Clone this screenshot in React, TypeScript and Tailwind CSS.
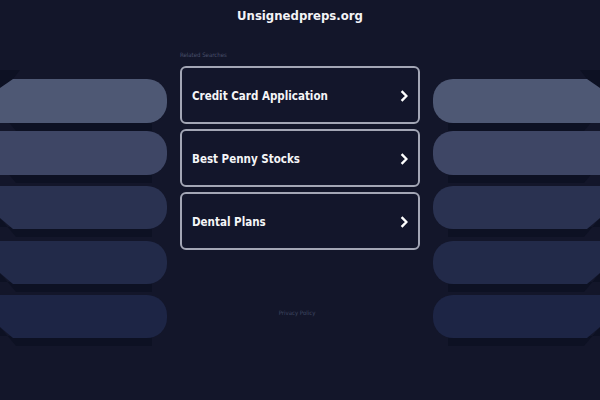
import React from "react";

type Bar = { t: number; b: number; c: string; ch: "top" | "none" | "bottom" };

const bars: Bar[] = [
  { t: 79, b: 123, c: "#4e5874", ch: "top" },
  { t: 131, b: 175, c: "#3e4665", ch: "none" },
  { t: 186, b: 229, c: "#2a3251", ch: "bottom" },
  { t: 241, b: 284, c: "#222a49", ch: "bottom" },
  { t: 295, b: 338, c: "#1d2545", ch: "bottom" },
];

function barPath(bar: Bar) {
  const R = 167;
  const r = 20;
  const { t, b, ch } = bar;
  const start = ch === "top" ? `M 0 ${t + 9} L 13 ${t}` : `M 0 ${t}`;
  const end = ch === "bottom" ? `H 13 L 0 ${b - 11} Z` : `H 0 Z`;
  return `${start} H ${R - r} A ${r} ${r} 0 0 1 ${R} ${t + r} V ${b - r} A ${r} ${r} 0 0 1 ${R - r} ${b} ${end}`;
}

function shadowPath(bar: Bar) {
  const { b } = bar;
  return `M 0 ${b - 11} L 16 ${b + 8} H 152 V ${b - 2} H 0 Z`;
}

function Stripes({ mirror }: { mirror?: boolean }) {
  return (
    <svg width="168" height="320" viewBox="0 30 168 320" className="shrink-0 block">
      <g transform={mirror ? "translate(168,0) scale(-1,1)" : undefined}>
        <path d="M 0 70 H 20 L 13 79 L 0 88 Z" fill="#0d1123" />
        {bars.map((bar, i) => (
          <path key={"s" + i} d={shadowPath(bar)} fill="#0d1123" />
        ))}
        {bars.map((bar, i) => (
          <path key={"b" + i} d={barPath(bar)} fill={bar.c} />
        ))}
      </g>
    </svg>
  );
}

function Chevron() {
  return (
    <svg width="8" height="12" viewBox="0 0 8 12" className="block shrink-0 mt-[1px]">
      <path d="M1.6 1.2 L6.4 6 L1.6 10.8" fill="none" stroke="#ffffff" strokeWidth="2.4" strokeLinejoin="miter" />
    </svg>
  );
}

const items = ["Credit Card Application", "Best Penny Stocks", "Dental Plans"];

export default function App() {
  return (
    <div className="w-[600px] h-[400px] bg-[#13162a] flex flex-col overflow-hidden [font-family:'DejaVu_Sans_Condensed','DejaVu_Sans',sans-serif] [font-stretch:condensed]">
      <div className="h-[30px] flex items-center justify-center text-[13px] font-bold text-[#f3f3f6] leading-none">
        Unsignedpreps.org
      </div>
      <div className="flex gap-[12px]">
        <Stripes />
        <div className="w-[240px] shrink-0 flex flex-col">
          <div className="mt-[21px] h-[8px] text-[6px] leading-[8px] text-[#4a516c]">Related Searches</div>
          <div className="mt-[7px] flex flex-col gap-[5px]">
            {items.map((it) => (
              <div
                key={it}
                className="h-[58px] border-2 border-[#a3a6b5] rounded-[6px] bg-[#13162b] flex items-center justify-between pl-[10px] pr-[10px]"
              >
                <span className="text-[11.5px] font-bold text-[#f5f5f7] leading-none mt-[3px]">{it}</span>
                <Chevron />
              </div>
            ))}
          </div>
          <div className="mt-[59px] h-[8px] text-[6px] leading-[8px] text-[#3f4662] text-center pr-[6px]">Privacy Policy</div>
        </div>
        <Stripes mirror />
      </div>
    </div>
  );
}
